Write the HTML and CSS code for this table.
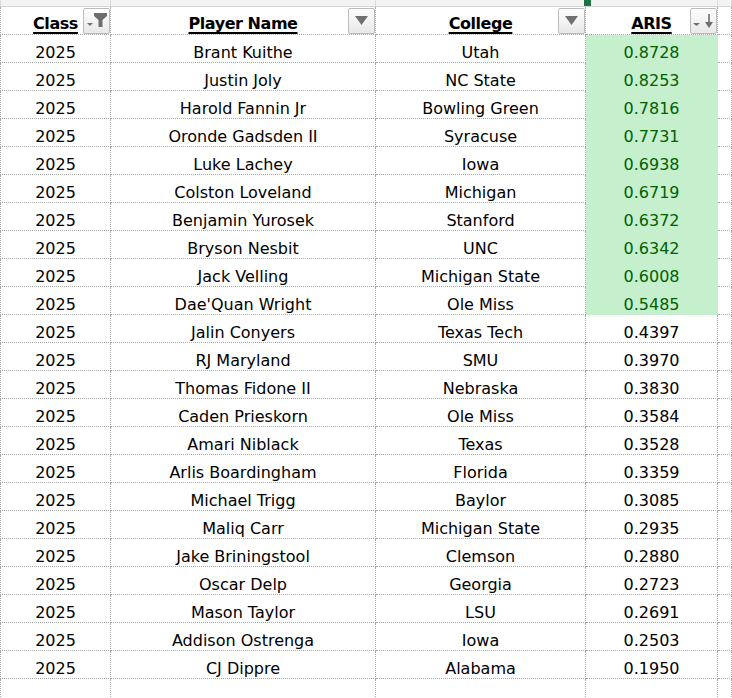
FILE: index.html
```html
<!DOCTYPE html>
<html>
<head>
<meta charset="utf-8">
<link rel="stylesheet" href="styles.css">
</head>
<body>
<div class="sheet">
  <div class="row strip">
    <div class="sc"></div><div class="sc"></div><div class="sc"></div><div class="sc sel"></div><div class="sc"></div>
  </div>
  <div class="row head">
    <div class="c"><span class="ht">Class</span>
      <span class="btn"><svg width="25" height="24" viewBox="0 0 25 24"><polygon points="3,14 9,14 6,17" fill="#707070"/><polygon points="10,4 23,4 23,7 18.5,11 18.5,18 14.5,18 14.5,11 10,7" fill="#6e6e6e"/></svg></span></div>
    <div class="c"><span class="ht">Player Name</span>
      <span class="btn"><svg width="25" height="24" viewBox="0 0 25 24"><polygon points="6,7 19,7 12.5,16" fill="#707070"/></svg></span></div>
    <div class="c"><span class="ht">College</span>
      <span class="btn"><svg width="25" height="24" viewBox="0 0 25 24"><polygon points="6,7 19,7 12.5,16" fill="#707070"/></svg></span></div>
    <div class="c"><span class="ht">ARIS</span>
      <span class="btn"><svg width="25" height="24" viewBox="0 0 25 24"><polygon points="2,14 9,14 5.5,17" fill="#707070"/><rect x="17.2" y="5" width="1.6" height="10" fill="#6e6e6e"/><polygon points="14,13 22,13 18,19" fill="#6e6e6e"/></svg></span></div>
    <div class="c"></div>
  </div>
  <div class="row"><div class="c">2025</div><div class="c">Brant Kuithe</div><div class="c">Utah</div><div class="c good">0.8728</div><div class="c"></div></div>
  <div class="row"><div class="c">2025</div><div class="c">Justin Joly</div><div class="c">NC State</div><div class="c good">0.8253</div><div class="c"></div></div>
  <div class="row"><div class="c">2025</div><div class="c">Harold Fannin Jr</div><div class="c">Bowling Green</div><div class="c good">0.7816</div><div class="c"></div></div>
  <div class="row"><div class="c">2025</div><div class="c">Oronde Gadsden II</div><div class="c">Syracuse</div><div class="c good">0.7731</div><div class="c"></div></div>
  <div class="row"><div class="c">2025</div><div class="c">Luke Lachey</div><div class="c">Iowa</div><div class="c good">0.6938</div><div class="c"></div></div>
  <div class="row"><div class="c">2025</div><div class="c">Colston Loveland</div><div class="c">Michigan</div><div class="c good">0.6719</div><div class="c"></div></div>
  <div class="row"><div class="c">2025</div><div class="c">Benjamin Yurosek</div><div class="c">Stanford</div><div class="c good">0.6372</div><div class="c"></div></div>
  <div class="row"><div class="c">2025</div><div class="c">Bryson Nesbit</div><div class="c">UNC</div><div class="c good">0.6342</div><div class="c"></div></div>
  <div class="row"><div class="c">2025</div><div class="c">Jack Velling</div><div class="c">Michigan State</div><div class="c good">0.6008</div><div class="c"></div></div>
  <div class="row"><div class="c">2025</div><div class="c">Dae'Quan Wright</div><div class="c">Ole Miss</div><div class="c good">0.5485</div><div class="c"></div></div>
  <div class="row"><div class="c">2025</div><div class="c">Jalin Conyers</div><div class="c">Texas Tech</div><div class="c">0.4397</div><div class="c"></div></div>
  <div class="row"><div class="c">2025</div><div class="c">RJ Maryland</div><div class="c">SMU</div><div class="c">0.3970</div><div class="c"></div></div>
  <div class="row"><div class="c">2025</div><div class="c">Thomas Fidone II</div><div class="c">Nebraska</div><div class="c">0.3830</div><div class="c"></div></div>
  <div class="row"><div class="c">2025</div><div class="c">Caden Prieskorn</div><div class="c">Ole Miss</div><div class="c">0.3584</div><div class="c"></div></div>
  <div class="row"><div class="c">2025</div><div class="c">Amari Niblack</div><div class="c">Texas</div><div class="c">0.3528</div><div class="c"></div></div>
  <div class="row"><div class="c">2025</div><div class="c">Arlis Boardingham</div><div class="c">Florida</div><div class="c">0.3359</div><div class="c"></div></div>
  <div class="row"><div class="c">2025</div><div class="c">Michael Trigg</div><div class="c">Baylor</div><div class="c">0.3085</div><div class="c"></div></div>
  <div class="row"><div class="c">2025</div><div class="c">Maliq Carr</div><div class="c">Michigan State</div><div class="c">0.2935</div><div class="c"></div></div>
  <div class="row"><div class="c">2025</div><div class="c">Jake Briningstool</div><div class="c">Clemson</div><div class="c">0.2880</div><div class="c"></div></div>
  <div class="row"><div class="c">2025</div><div class="c">Oscar Delp</div><div class="c">Georgia</div><div class="c">0.2723</div><div class="c"></div></div>
  <div class="row"><div class="c">2025</div><div class="c">Mason Taylor</div><div class="c">LSU</div><div class="c">0.2691</div><div class="c"></div></div>
  <div class="row"><div class="c">2025</div><div class="c">Addison Ostrenga</div><div class="c">Iowa</div><div class="c">0.2503</div><div class="c"></div></div>
  <div class="row"><div class="c">2025</div><div class="c">CJ Dippre</div><div class="c">Alabama</div><div class="c">0.1950</div><div class="c"></div></div>
  <div class="row"><div class="c"></div><div class="c"></div><div class="c"></div><div class="c"></div><div class="c"></div></div>
</div>
</body>
</html>
```
FILE: styles.css
```css
html, body {
  margin: 0;
  padding: 0;
  background: #ffffff;
  overflow: hidden;
}
.sheet {
  width: 732px;
  font-family: "DejaVu Sans", Verdana, sans-serif;
  font-size: 16px;
  color: #000;
}
.row {
  display: grid;
  grid-template-columns: 111px 265px 210px 132px 1fr;
}
.strip {
  height: 7px;
  background: #f3f3f3;
  border-bottom: 1px solid #d6d6d6;
  box-sizing: border-box;
}
.sc {
  border-right: 1px solid #dadada;
  position: relative;
}
.sc:first-child {
  border-left: 1px solid #dadada;
}
.sc.sel::before {
  content: "";
  position: absolute;
  left: -2px;
  top: 0;
  width: 7px;
  height: 6px;
  background: #1f7244;
}
.c {
  box-sizing: border-box;
  height: 28px;
  padding-top: 8px;
  line-height: 19px;
  text-align: center;
  white-space: nowrap;
  overflow: hidden;
  border-right: 1px dotted #a9a9a9;
  border-bottom: 1px dotted #a9a9a9;
}
.c:first-child {
  border-left: 1px dotted #a9a9a9;
}
.head .c {
  position: relative;
  padding-top: 7px;
  font-weight: bold;
  overflow: visible;
}
.ht {
  letter-spacing: -0.45px;
  text-decoration: underline;
  text-decoration-thickness: 2px;
  text-underline-offset: 3px;
}
.btn {
  position: absolute;
  right: 0;
  top: 1px;
  width: 27px;
  height: 26px;
  box-sizing: border-box;
  border: 1px solid #bcbcbc;
  border-radius: 2px;
  background: linear-gradient(#fefefe, #e8e8e8);
  display: flex;
  align-items: center;
  justify-content: center;
}
.btn svg {
  display: block;
}
.good {
  background: #c6efce;
  color: #006100;
  border-right-color: #c6efce;
  border-bottom-color: #c6efce;
}
```
